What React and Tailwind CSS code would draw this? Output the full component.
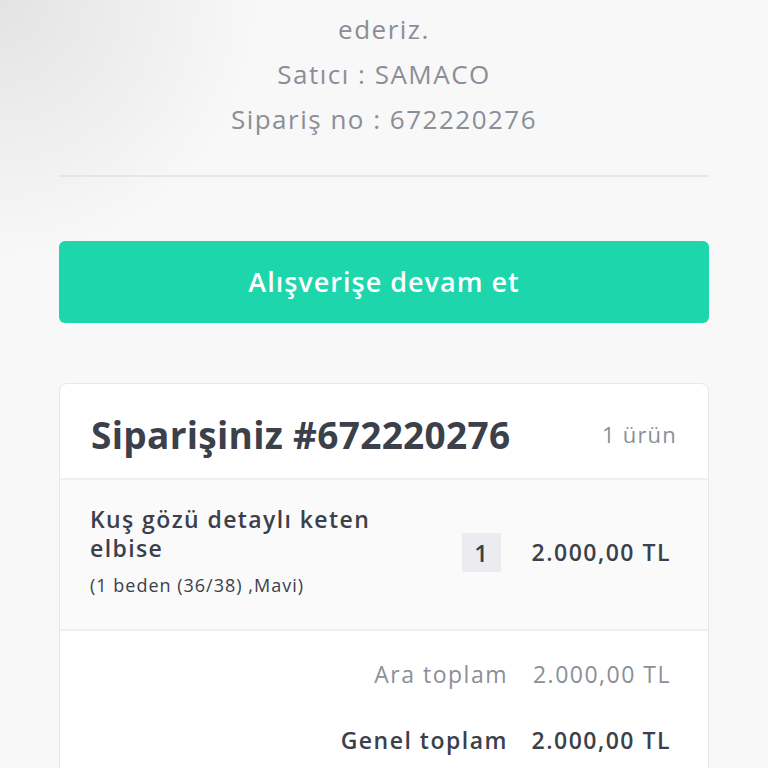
const FONT = { fontFamily: '"Open Sans", "Noto Sans", sans-serif' };

const Row = ({ label, value, strong }) => (
  <div className="flex items-center justify-end h-[66px] text-[23px] tracking-[1.5px]">
    <span className={strong ? 'font-semibold text-[#3b404b]' : 'text-[#8b8f97]'}>
      {label}
    </span>
    <span className={strong ? 'w-[163px] text-right font-semibold text-[#3b404b]' : 'w-[163px] text-right text-[#8b8f97]'}>
      {value}
    </span>
  </div>
);

export default function App() {
  return (
    <div
      style={FONT}
      className="h-[768px] overflow-hidden bg-[#f8f8f9] bg-[radial-gradient(ellipse_at_0%_0%,#e3e3e4_0%,rgba(248,248,249,0)_24%)]"
    >
      <div className="px-[59px]">
        <div className="pt-[7px] text-center text-[26px] leading-[45px] font-medium text-[#8a8e96] tracking-[1.5px]">
          <p>ederiz.</p>
          <p>Satıcı : SAMACO</p>
          <p>Sipariş no : 672220276</p>
        </div>

        <div className="mt-[33px] h-[2px] bg-[#e6e6e8]" />

        <button className="mt-[64px] w-full h-[82px] rounded-[6px] bg-[#1dd6ac] text-white text-[27px] font-semibold tracking-[1px]">
          Alışverişe devam et
        </button>

        <div className="mt-[60px] rounded-[8px] border border-[#e6e7ea] bg-white overflow-hidden">
          <div className="flex items-center justify-between h-[94px] pt-[7px] pl-[31px] pr-[31px]">
            <h1 className="text-[37px] font-bold text-[#3b404b] tracking-[0.3px]">Siparişiniz #672220276</h1>
            <span className="text-[22px] text-[#8b8f97] tracking-[1.2px]">1 ürün</span>
          </div>
          <div className="border-t-2 border-[#eeeff1] bg-[#fafafb] h-[151px] flex items-start pt-[25px] pl-[30px] pr-[37px]">
            <div className="flex-1">
              <p className="text-[23px] leading-[29px] font-semibold text-[#3b404b] tracking-[1.4px] w-[310px]">Kuş gözü detaylı keten elbise</p>
              <p className="mt-[9px] text-[18px] text-[#3b404b] tracking-[1px]">(1 beden (36/38) ,Mavi)</p>
            </div>
            <div className="mt-[28px] flex items-center">
              <span className="w-[39px] h-[39px] bg-[#eaecef] flex items-center justify-center text-[24px] font-semibold text-[#3b404b]">1</span>
              <span className="ml-[31px] text-[23px] font-semibold text-[#3b404b] tracking-[1.5px]">2.000,00 TL</span>
            </div>
          </div>
          <div className="border-t-2 border-[#eeeff1] pt-[10px] pr-[37px]">
            <Row label="Ara toplam" value="2.000,00 TL" />
            <Row label="Genel toplam" value="2.000,00 TL" strong />
          </div>
        </div>
      </div>
    </div>
  );
}
